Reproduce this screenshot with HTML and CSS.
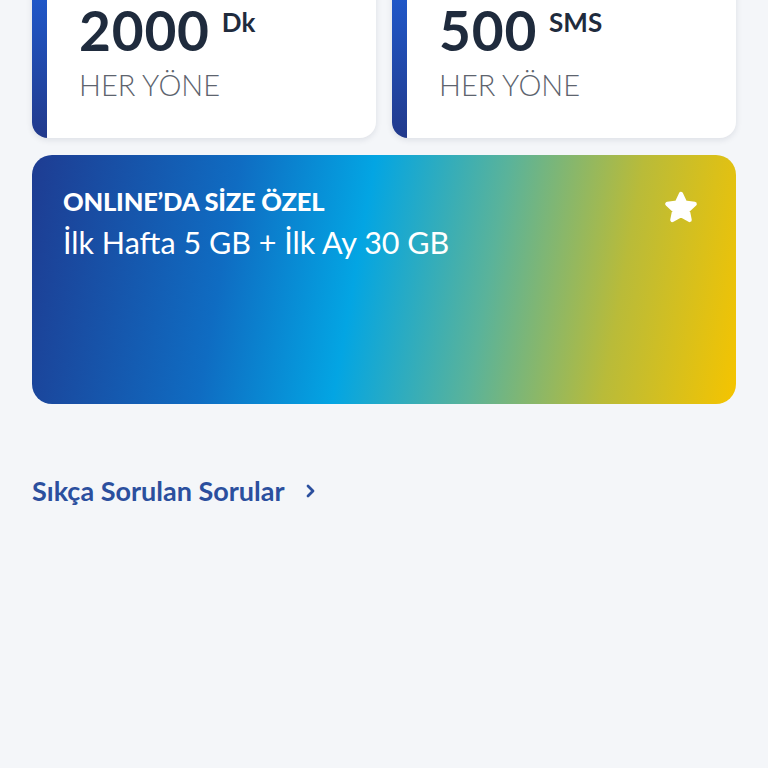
FILE: index.html
```html
<!DOCTYPE html>
<html lang="tr">
<head>
<meta charset="utf-8">
<link rel="stylesheet" href="styles.css">
</head>
<body>
<main class="page">
  <section class="cards">
    <div class="card">
      <div class="value">2000<span class="unit">Dk</span></div>
      <div class="label">HER YÖNE</div>
    </div>
    <div class="card">
      <div class="value">500<span class="unit">SMS</span></div>
      <div class="label">HER YÖNE</div>
    </div>
  </section>
  <section class="promo">
    <div class="promo-text">
      <div class="promo-title">ONLINE’DA SİZE ÖZEL</div>
      <div class="promo-sub">İlk Hafta 5 GB + İlk Ay 30 GB</div>
    </div>
    <svg class="star" width="40" height="38" viewBox="0 0 24 24">
      <path d="M12 2.6 L14.6 8.1 L20.6 8.8 L16.2 12.9 L17.4 18.9 L12 15.9 L6.6 18.9 L7.8 12.9 L3.4 8.8 L9.4 8.1 Z" fill="#fff" stroke="#fff" stroke-width="2.8" stroke-linejoin="round"/>
    </svg>
  </section>
  <a class="faq" href="#">Sıkça Sorulan Sorular
    <svg class="chev" width="12" height="14" viewBox="0 0 12 14"><path d="M3 2 L8 7 L3 12" fill="none" stroke="#2b4f9e" stroke-width="2.8" stroke-linecap="round" stroke-linejoin="round"/></svg>
  </a>
</main>
</body>
</html>
```

FILE: styles.css
```css
* { box-sizing: border-box; }
html, body { margin: 0; padding: 0; }
body {
  background: #f4f6f9;
  font-family: Lato, "Noto Sans", sans-serif;
  width: 768px;
  height: 768px;
  overflow: hidden;
}
.page {
  padding: 0 32px;
}
.cards {
  display: grid;
  grid-template-columns: 1fr 1fr;
  gap: 16px;
  margin-top: -20px;
}
.card {
  background: linear-gradient(180deg, #1f5bd0 0%, #223a8c 100%) left top / 15px 100% no-repeat, #fff;
  border-radius: 16px;
  box-shadow: 0 2px 6px rgba(20, 30, 60, 0.10);
  padding: 18px 20px 35px 47px;
}
.value {
  font-size: 55px;
  line-height: 48px;
  font-weight: 700;
  color: #1f2b3d;
  letter-spacing: 0.8px;
}
.unit {
  font-size: 26px;
  font-weight: 700;
  vertical-align: 19px;
  margin-left: 12px;
  letter-spacing: 0;
}
.label {
  margin-top: 13px;
  font-size: 29px;
  line-height: 36px;
  font-weight: 300;
  color: #5d646e;
}
.promo {
  margin-top: 17px;
  height: 249px;
  border-radius: 20px;
  background: linear-gradient(100deg, #1e3c92 0%, #0f6cc2 28%, #03a5e3 46%, #5ab39a 64%, #b9bb39 82%, #f5c400 100%);
  display: flex;
  justify-content: space-between;
  align-items: flex-start;
  padding: 32px 35px 0 31px;
  color: #fff;
}
.promo-title {
  font-size: 25.5px;
  line-height: 28px;
  font-weight: 900;
  letter-spacing: -0.2px;
}
.promo-sub {
  margin-top: 10px;
  font-size: 30.5px;
  line-height: 34px;
  font-weight: 400;
}
.star {
  margin-top: 3px;
}
.faq {
  display: inline-flex;
  align-items: center;
  gap: 20px;
  margin-top: 72px;
  font-size: 27px;
  line-height: 30px;
  font-weight: 700;
  color: #2b4f9e;
  text-decoration: none;
}
```
